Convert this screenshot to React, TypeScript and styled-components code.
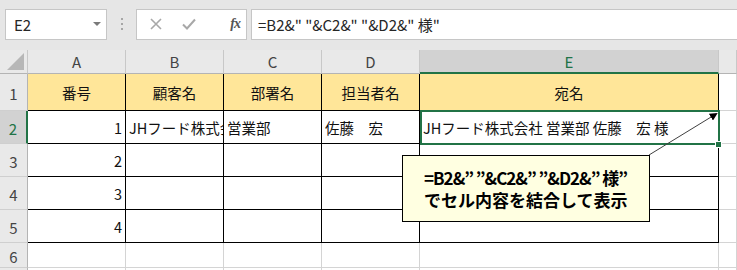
import { Fragment } from 'react';
import styled, { createGlobalStyle } from 'styled-components';

const GlobalStyle = createGlobalStyle`
  html, body {
    margin: 0;
    padding: 0;
    background: #ffffff;
    overflow: hidden;
  }
  * {
    box-sizing: border-box;
  }
`;

const FONT = `"Noto Sans CJK JP", "Noto Sans", sans-serif`;
const GREEN = '#217346';

const COLUMNS = ['A', 'B', 'C', 'D', 'E'];

type Align = 'left' | 'center' | 'right';

const ROWS: { text: string; align?: Align }[][] = [
  [
    { text: '番号', align: 'center' },
    { text: '顧客名', align: 'center' },
    { text: '部署名', align: 'center' },
    { text: '担当者名', align: 'center' },
    { text: '宛名', align: 'center' },
  ],
  [
    { text: '1', align: 'right' },
    { text: 'JHフード株式会社' },
    { text: '営業部' },
    { text: '佐藤　宏' },
    { text: 'JHフード株式会社 営業部 佐藤　宏 様' },
  ],
  [{ text: '2', align: 'right' }, { text: '' }, { text: '' }, { text: '' }, { text: '' }],
  [{ text: '3', align: 'right' }, { text: '' }, { text: '' }, { text: '' }, { text: '' }],
  [{ text: '4', align: 'right' }, { text: '' }, { text: '' }, { text: '' }, { text: '' }],
];

const Page = styled.div`
  position: relative;
  width: 737px;
  height: 270px;
  overflow: hidden;
  font-family: ${FONT};
  background: #ffffff;
`;

const FormulaBar = styled.div`
  display: flex;
  align-items: center;
  height: 50px;
  padding: 0 0 2px 5px;
  background: #e6e6e6;
`;

const NameBox = styled.div`
  display: flex;
  align-items: center;
  justify-content: space-between;
  width: 102px;
  height: 31px;
  padding: 0 5px 0 8px;
  background: #ffffff;
  border: 1px solid #c6c6c6;
  font-size: 15px;
  color: #262626;
`;

const Caret = styled.span`
  width: 0;
  height: 0;
  border-left: 4px solid transparent;
  border-right: 4px solid transparent;
  border-top: 4px solid #7a7a7a;
`;

const Grip = styled.div`
  display: flex;
  flex-direction: column;
  gap: 3px;
  margin: 0 13px 0 14px;
`;

const GripDot = styled.span`
  width: 2px;
  height: 2px;
  background: #a6a6a6;
`;

const ButtonBox = styled.div`
  display: flex;
  align-items: center;
  width: 111px;
  height: 31px;
  padding: 0 6px 0 12px;
  gap: 18px;
  background: #ffffff;
  border: 1px solid #c6c6c6;
`;

const FxLabel = styled.span`
  margin-left: auto;
  font-family: "Liberation Serif", serif;
  font-style: italic;
  font-weight: 700;
  font-size: 14px;
  color: #555555;
  letter-spacing: -1px;
`;

const FormulaInput = styled.div`
  flex: 1;
  display: flex;
  align-items: center;
  height: 31px;
  margin-left: 4px;
  margin-right: -4px;
  padding-left: 6px;
  background: #ffffff;
  border: 1px solid #c6c6c6;
  font-size: 15px;
  color: #262626;
  white-space: nowrap;
`;

const Grid = styled.div`
  display: grid;
  grid-template-columns: 28px 98px 98px 98px 98px 299px 1fr;
  grid-template-rows: 24px 37px 33px 33px 33px 33px 25px 1fr;
`;

const Corner = styled.div`
  position: relative;
  background: #e9e9e9;
  border-right: 1px solid #c8c8c8;
  border-bottom: 1px solid #b4b4b4;

  &::after {
    content: '';
    position: absolute;
    right: 3px;
    bottom: 3px;
    width: 0;
    height: 0;
    border-left: 17px solid transparent;
    border-bottom: 17px solid #b7b7b7;
  }
`;

const ColHeader = styled.div<{ $selected?: boolean }>`
  display: flex;
  align-items: center;
  justify-content: center;
  font-size: 15px;
  color: ${({ $selected }) => ($selected ? GREEN : '#444444')};
  background: ${({ $selected }) => ($selected ? '#d2d2d2' : '#e9e9e9')};
  border-right: 1px solid #c8c8c8;
  border-bottom: ${({ $selected }) => ($selected ? `2px solid ${GREEN}` : '1px solid #b4b4b4')};
`;

const RowHeader = styled.div<{ $selected?: boolean }>`
  display: flex;
  align-items: center;
  justify-content: center;
  padding-top: 3px;
  font-size: 15px;
  color: ${({ $selected }) => ($selected ? GREEN : '#444444')};
  background: ${({ $selected }) => ($selected ? '#d2d2d2' : '#e9e9e9')};
  border-right: ${({ $selected }) => ($selected ? `2px solid ${GREEN}` : '1px solid #b4b4b4')};
  border-bottom: 1px solid #cfcfcf;
`;

const Cell = styled.div<{ $align?: Align; $fill?: string; $ruled?: boolean }>`
  position: relative;
  display: flex;
  align-items: center;
  justify-content: ${({ $align }) =>
    $align === 'center' ? 'center' : $align === 'right' ? 'flex-end' : 'flex-start'};
  padding: 1px 3px 0 3px;
  font-size: 14.5px;
  color: #111111;
  white-space: nowrap;
  overflow: hidden;
  background: ${({ $fill }) => $fill ?? '#ffffff'};
  border-right: 1px solid ${({ $ruled }) => ($ruled ? '#000000' : '#d4d4d4')};
  border-bottom: 1px solid ${({ $ruled }) => ($ruled ? '#000000' : '#d4d4d4')};
`;

const Selection = styled.div`
  position: absolute;
  left: 420px;
  top: 110px;
  width: 300px;
  height: 35px;
  border: 2px solid ${GREEN};
  pointer-events: none;
`;

const FillHandle = styled.div`
  position: absolute;
  left: 715px;
  top: 141px;
  width: 7px;
  height: 7px;
  background: ${GREEN};
  border: 1px solid #ffffff;
`;

const Leader = styled.svg`
  position: absolute;
  left: 0;
  top: 0;
  pointer-events: none;
`;

const Callout = styled.div`
  position: absolute;
  left: 402px;
  top: 155px;
  width: 248px;
  height: 67px;
  padding: 11px 0 0 21px;
  background: #ffffe1;
  border: 1px solid #000000;
  font-family: ${FONT};
  font-weight: 700;
  font-size: 17px;
  line-height: 22px;
  color: #000000;
  white-space: nowrap;
`;

const CalloutLine = styled.div<{ $tracking?: number }>`
  letter-spacing: ${({ $tracking }) => $tracking ?? 0}px;
`;

function CrossIcon() {
  return (
    <svg width="14" height="14" viewBox="0 0 14 14">
      <path d="M2 2 L12 12 M12 2 L2 12" stroke="#a8a8a8" strokeWidth="1.6" fill="none" />
    </svg>
  );
}

function CheckIcon() {
  return (
    <svg width="16" height="14" viewBox="0 0 16 14">
      <path d="M2 7.5 L6 11.5 L14 2.5" stroke="#a8a8a8" strokeWidth="2" fill="none" />
    </svg>
  );
}

export default function App() {
  return (
    <Page>
      <GlobalStyle />
      <FormulaBar>
        <NameBox>
          E2
          <Caret />
        </NameBox>
        <Grip>
          <GripDot />
          <GripDot />
          <GripDot />
        </Grip>
        <ButtonBox>
          <CrossIcon />
          <CheckIcon />
          <FxLabel>fx</FxLabel>
        </ButtonBox>
        <FormulaInput>=B2&amp;" "&amp;C2&amp;" "&amp;D2&amp;" 様"</FormulaInput>
      </FormulaBar>

      <Grid>
        <Corner />
        {COLUMNS.map((col) => (
          <ColHeader key={col} $selected={col === 'E'}>
            {col}
          </ColHeader>
        ))}
        <ColHeader />

        {ROWS.map((row, r) => (
          <Fragment key={r}>
            <RowHeader $selected={r === 1}>{r + 1}</RowHeader>
            {row.map((cell, c) => (
              <Cell key={c} $align={cell.align} $fill={r === 0 ? '#ffe699' : undefined} $ruled>
                {cell.text}
              </Cell>
            ))}
            <Cell />
          </Fragment>
        ))}

        <RowHeader>6</RowHeader>
        {[0, 1, 2, 3, 4, 5].map((c) => (
          <Cell key={`r6-${c}`} />
        ))}
        <RowHeader />
        {[0, 1, 2, 3, 4, 5].map((c) => (
          <Cell key={`r7-${c}`} />
        ))}
      </Grid>

      <Selection />
      <FillHandle />

      <Leader width="737" height="270" viewBox="0 0 737 270">
        <defs>
          <marker id="head" markerWidth="8" markerHeight="8" refX="6" refY="4" orient="auto" markerUnits="userSpaceOnUse">
            <path d="M0 0 L8 4 L0 8 Z" fill="#000000" />
          </marker>
        </defs>
        <line x1="649" y1="155" x2="716" y2="114" stroke="#404040" strokeWidth="1" markerEnd="url(#head)" />
      </Leader>

      <Callout>
        <CalloutLine $tracking={-1}>=B2&amp;” ”&amp;C2&amp;” ”&amp;D2&amp;” 様”</CalloutLine>
        <CalloutLine>でセル内容を結合して表示</CalloutLine>
      </Callout>
    </Page>
  );
}
